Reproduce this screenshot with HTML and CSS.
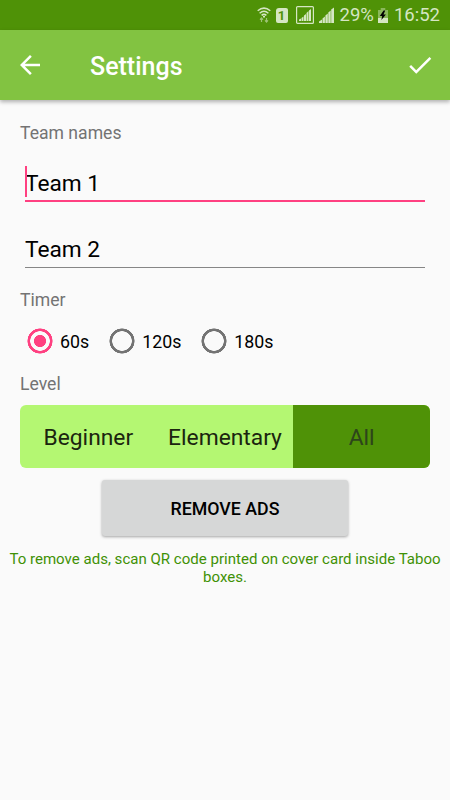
FILE: index.html
```html
<!DOCTYPE html>
<html lang="en">
<head>
    <meta charset="UTF-8">
    <meta name="viewport" content="width=device-width, initial-scale=1.0">
    <title>Settings</title>
    <link rel="stylesheet" href="styles.css">
</head>
<body>
    <div class="status-bar">
        <svg class="wifi" width="14" height="16" viewBox="0 0 14 16" fill="none" stroke="currentColor" stroke-width="1.5">
            <path d="M.7 3.8Q7-1.6 13.3 3.8M2.6 6.2Q7 2.4 11.4 6.2M4.6 8.4Q7 6.4 9.4 8.4"/>
            <path d="M6 9h2v1.5H6z" fill="currentColor" stroke="none"/>
            <path d="M4.5 15v-4M3 12.6L4.5 11L6 12.6M9.5 11v4M8 13.4L9.5 15L11 13.4" stroke-width="1.2" opacity=".6"/>
        </svg>
        <span class="sim">1</span>
        <svg class="signal-box" width="18" height="18" viewBox="0 0 18 18">
            <rect x=".6" y=".6" width="16.8" height="16.8" rx="1" fill="none" stroke="currentColor" stroke-width="1.2"/>
            <path d="M3 15v-1.500l2-1V15zM5.500 15v-3l2-1.500V15zM8 15V9.500L10 8v7zM10.500 15V7l2-2v10zM13 15V4.500L15 3v12z" fill="currentColor"/>
        </svg>
        <svg class="signal" width="15" height="16" viewBox="0 0 15 16">
            <path d="M0 16v-1.500l3-2V16zM3.500 16v-4.500l2.400-2V16zM6.400 16V8.500l2.400-2V16zM9.300 16V5.500l2.400-2V16zM12.200 16V2.500L15 .5V16z" fill="currentColor"/>
        </svg>
        <span class="battery-level">29%</span>
        <svg class="battery" width="10" height="15" viewBox="0 0 11 15" preserveAspectRatio="none">
            <path d="M3 0h5v2h3v8H0V2h3z" fill="currentColor" opacity=".45"/>
            <path d="M0 10h11v5H0z" fill="currentColor"/>
            <path d="M6.200 2.500L2 8h2.600L3.700 12L8.700 6.500H6L8 2.500z" fill="#000"/>
        </svg>
        <span class="clock">16:52</span>
    </div>
    <header>
        <svg class="back" width="30" height="30" viewBox="0 0 24 24" fill="currentColor">
            <path d="M20 11H7.830l5.590-5.590L12 4l-8 8 8 8 1.410-1.410L7.830 13H20v-2z"/>
        </svg>
        <h1>Settings</h1>
        <svg class="done" width="30" height="30" viewBox="0 0 24 24" fill="currentColor">
            <path d="M9 16.170L4.830 12l-1.420 1.410L9 19 21 7l-1.410-1.410z"/>
        </svg>
    </header>
    <main>
        <h2>Team names</h2>
        <div class="field focused">
            <input type="text" value="Team 1" aria-label="Team 1 name">
            <span class="cursor"></span>
        </div>
        <div class="field">
            <input type="text" value="Team 2" aria-label="Team 2 name">
        </div>

        <h2>Timer</h2>
        <div class="timer">
            <label><input type="radio" name="timer" checked>60s</label>
            <label><input type="radio" name="timer">120s</label>
            <label><input type="radio" name="timer">180s</label>
        </div>

        <h2>Level</h2>
        <div class="levels">
            <button class="level">Beginner</button>
            <button class="level">Elementary</button>
            <button class="level selected">All</button>
        </div>

        <button class="remove-ads">REMOVE ADS</button>
    </main>
    <p class="note">To remove ads, scan QR code printed on cover card inside Taboo boxes.</p>
</body>
</html>
```
FILE: styles.css
```css
:root {
    --primary: #82c341;
    --primary-dark: #4f9207;
    --primary-light: #b4f772;
    --accent: #ff4081;
    --bg-color: #fafafa;
    --hint: #737373;
}

* {
    box-sizing: border-box;
}

body {
    margin: 0;
    min-height: 100vh;
    background-color: var(--bg-color);
    color: #000;
    font-family: Roboto, sans-serif;
}

button, input {
    font-family: inherit;
    color: inherit;
    margin: 0;
    padding: 0;
    border: none;
    background: none;
}

.status-bar {
    display: flex;
    align-items: center;
    justify-content: flex-end;
    height: 30px;
    padding-right: 10px;
    background-color: var(--primary-dark);
    color: #d5e6c3;
    font-size: 18.5px;
    line-height: 32px;
}

.sim {
    width: 12px;
    height: 15px;
    margin: 0 8px 0 5px;
    border-radius: 3px 2px 2px 2px;
    background-color: #d5e6c3;
    color: var(--primary-dark);
    font-size: 13px;
    font-weight: bold;
    line-height: 15px;
    text-align: center;
}

.signal {
    margin: 0 6px 0 5px;
}

.battery {
    margin: 0 6px 0 4px;
}

header {
    display: flex;
    align-items: center;
    height: 70px;
    padding: 0 15px;
    background-color: var(--primary);
    color: #fff;
    box-shadow: 0 2px 4px rgba(0, 0, 0, 0.3);
}

h1 {
    flex-grow: 1;
    margin: 3px 0 0 45px;
    font-size: 25px;
    font-weight: 500;
    line-height: 30px;
}

main {
    padding: 23px 20px 0;
}

h2 {
    margin: 0;
    color: var(--hint);
    font-size: 17.6px;
    font-weight: normal;
    line-height: 20px;
}

.field {
    position: relative;
    height: 46px;
    margin: 0 5px 22px;
    padding-top: 9px;
    border-bottom: 1px solid #868686;
}

.field.focused {
    height: 40px;
    margin-top: 19px;
    margin-bottom: 20px;
    padding-top: 4px;
    border-bottom: 2px solid var(--accent);
}

.field input {
    display: block;
    width: 100%;
    height: 100%;
    outline: none;
    font-size: 22.7px;
}

.cursor {
    position: absolute;
    left: 0;
    top: 4px;
    width: 2px;
    height: 31px;
    background-color: var(--accent);
}

.timer {
    display: flex;
    gap: 20px;
    height: 64px;
    padding: 0 0 2px 7px;
}

.timer label {
    display: flex;
    align-items: center;
    gap: 7px;
    font-size: 17.8px;
}

.timer input {
    appearance: none;
    width: 26px;
    height: 26px;
    border-radius: 50%;
    background: radial-gradient(circle, transparent 9.500px, var(--hint) 10px, var(--hint) 12.300px, transparent 12.800px);
}

.timer input:checked {
    background: radial-gradient(circle, var(--accent) 5.800px, transparent 6.300px, transparent 9.500px, var(--accent) 10px, var(--accent) 12.300px, transparent 12.800px);
}

.levels {
    display: grid;
    grid-template-columns: repeat(3, 1fr);
    height: 63px;
    margin-top: 11px;
    border-radius: 6px;
    overflow: hidden;
    background-color: var(--primary-light);
}

.level {
    padding-top: 2px;
    color: #1b250f;
    font-size: 22.8px;
}

.level.selected {
    background-color: var(--primary-dark);
    color: #2d451b;
}

.remove-ads {
    display: block;
    width: 246px;
    height: 56px;
    margin: 12px auto 0;
    border-radius: 3px;
    background-color: #d6d7d7;
    box-shadow: 0 1px 3px rgba(0, 0, 0, 0.35);
    font-size: 17.8px;
    font-weight: 500;
}

.note {
    margin: 14px 8px 0;
    color: #3f9105;
    font-size: 15.05px;
    line-height: 18px;
    text-align: center;
}
```
